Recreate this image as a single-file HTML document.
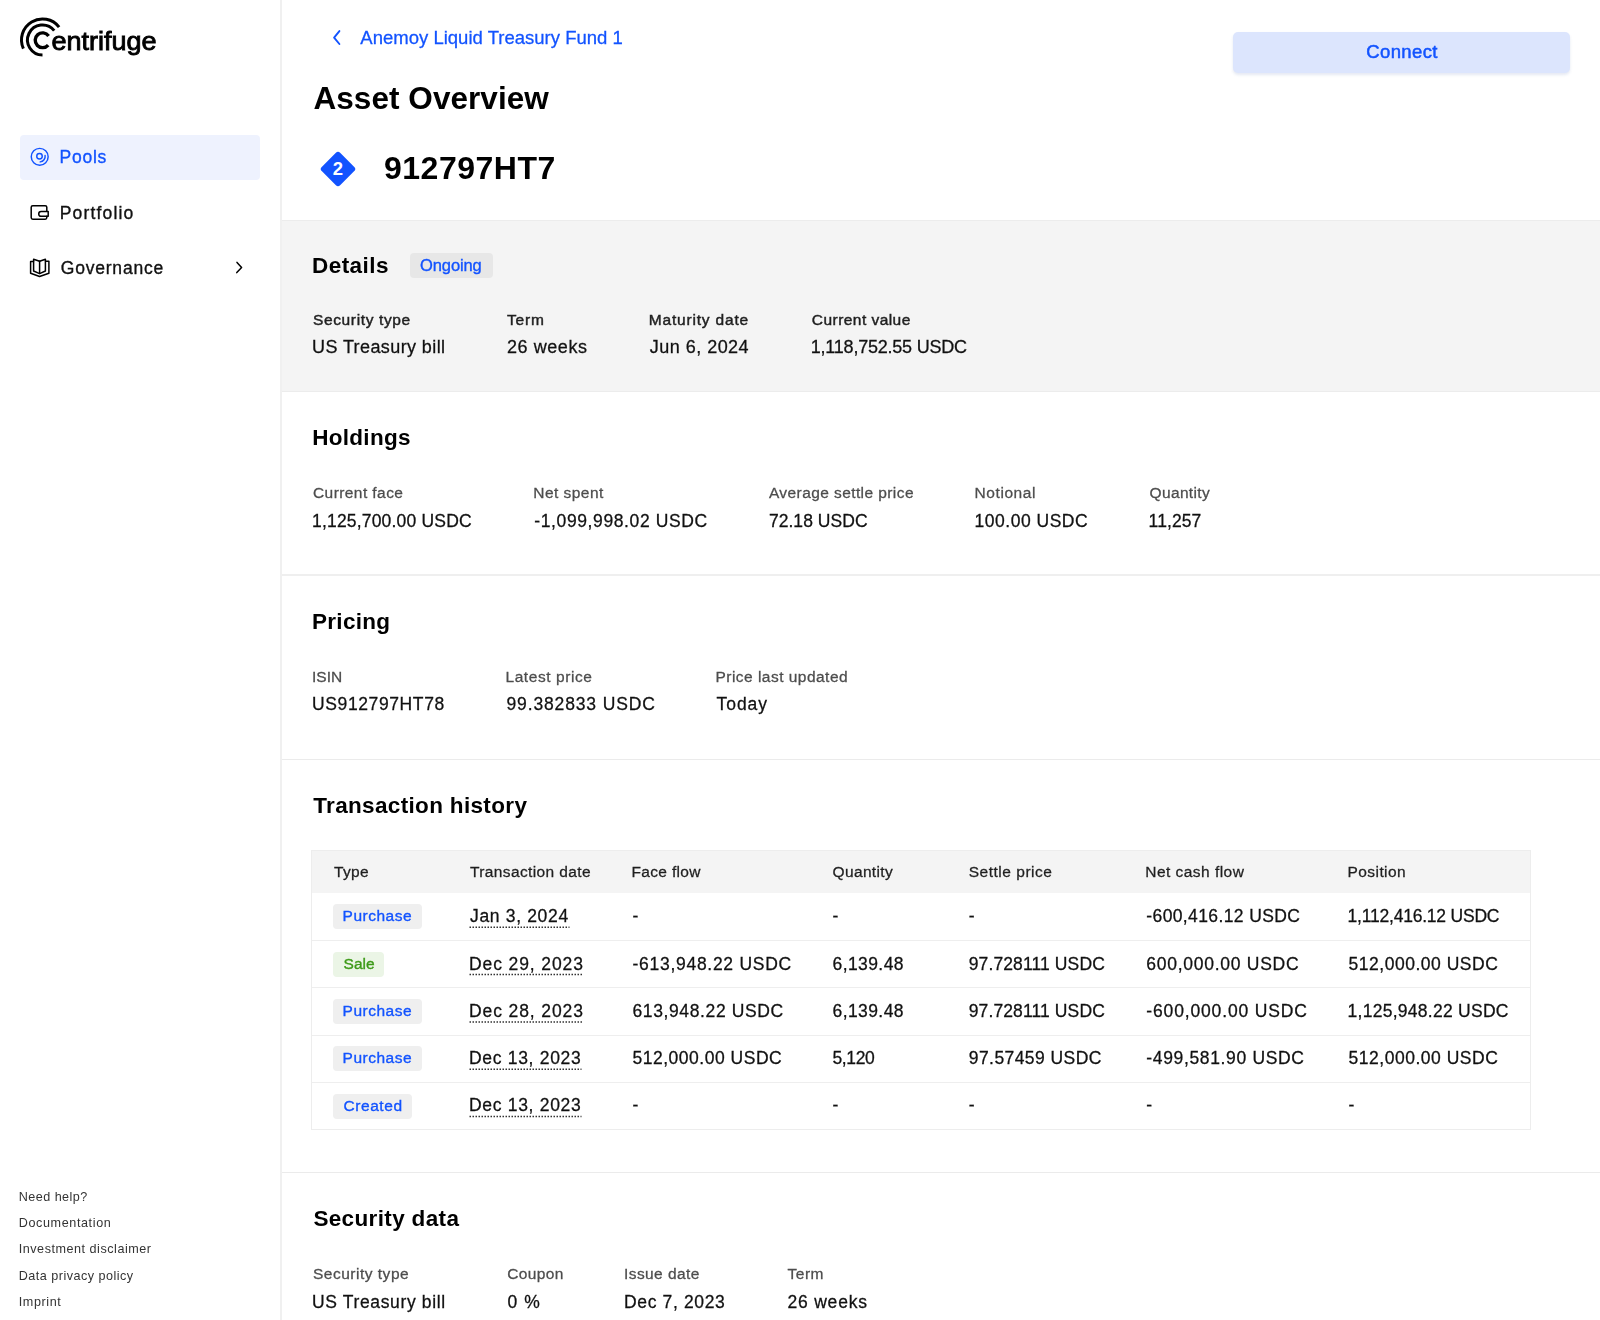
<!DOCTYPE html>
<html><head><meta charset="utf-8">
<style>
html,body{margin:0;padding:0;}
body{width:1600px;height:1320px;overflow:hidden;background:#fff;position:relative;-webkit-font-smoothing:antialiased;font-family:"Liberation Sans",sans-serif;}
.t{position:absolute;white-space:nowrap;}
.a{position:absolute;}
svg{position:absolute;overflow:visible;}
</style></head><body>
<!-- sidebar border -->
<div class="a" style="left:280px;top:0;width:2px;height:1320px;background:#f0f0f0"></div>
<!-- logo -->
<svg style="left:0;top:0;will-change:transform" width="200" height="80" viewBox="0 0 200 80">
  <g fill="none" stroke="#000" stroke-width="3">
    <path d="M59.1,27.1 A21,21 0 0 0 23.4,48.7"/>
    <path d="M54.2,30.6 A15,15 0 1 0 42.5,55"/>
  </g>
  <path d="M48.6,35.9 A7.4,7.4 0 1 0 48.2,45.1" fill="none" stroke="#000" stroke-width="3.4"/>
  <text x="51.5" y="50" font-family="Liberation Sans" font-size="25" stroke="#000" stroke-width="0.85" textLength="105" lengthAdjust="spacingAndGlyphs">entrifuge</text>
</svg>
<!-- pools nav bg -->
<div class="a" style="left:19.5px;top:134.5px;width:240.5px;height:45px;border-radius:4px;background:#eef2fe"></div>
<!-- pools icon -->
<svg style="left:0;top:0" width="60" height="300" viewBox="0 0 60 300">
  <g fill="none" stroke="#1253ff" stroke-width="1.45" stroke-linecap="round">
    <circle cx="39.7" cy="156.8" r="8.45"/>
    <circle cx="39.5" cy="156.2" r="2.75"/>
    <path d="M45.1,155.5 A5.6,5.6 0 0 1 40.2,161.9"/>
  </g>
  <g fill="none" stroke="#000" stroke-width="1.5" stroke-linecap="round" stroke-linejoin="round">
    <path d="M46.8,211.3 V207.3 Q46.8,205.7 45.2,205.7 H32.8 Q31.2,205.7 31.2,207.3 V217.6 Q31.2,219.2 32.8,219.2 H45.2 Q46.8,219.2 46.8,217.6 V216.3"/>
    <path d="M48.2,211.6 H41.1 A2.35,2.35 0 0 0 41.1,216.3 H48.2 Z"/>
    <path d="M33.5,261.4 H30.6 V273.2 L39.6,276.5 L48.9,273.2 V261.2 H45.6"/>
    <path d="M33.6,259.2 L39.6,261.3 L45.4,259.2 V271 L39.6,273.6 L33.6,271 Z"/>
    <path d="M39.6,261.3 V273.6"/>
    <path d="M237,262.4 L241.6,267.5 L236.8,272.6"/>
  </g>
</svg>
<!-- connect button -->
<div class="a" style="left:1233px;top:31.5px;width:337px;height:41px;border-radius:5px;background:#dce5fd;box-shadow:0 2px 3px rgba(40,70,160,0.12)"></div>
<!-- back chevron -->
<svg style="left:0;top:0" width="400" height="60" viewBox="0 0 400 60">
  <path d="M339.4,31.1 L334.1,37.6 L339.4,44" fill="none" stroke="#1253ff" stroke-width="1.9" stroke-linecap="round" stroke-linejoin="round"/>
</svg>
<!-- diamond -->
<div class="a" style="left:324.9px;top:155.9px;width:26px;height:26px;border-radius:3px;background:#1253ff;transform:rotate(45deg)"></div>
<div class="t" style="left:332.5px;top:156px;width:11px;font-size:18.5px;line-height:26px;font-weight:700;color:#fff;text-align:center">2</div>
<!-- details gray section -->
<div class="a" style="left:282px;top:220px;width:1318px;height:172px;background:#f4f4f4;border-top:1.5px solid #ececec;border-bottom:1.5px solid #ececec;box-sizing:border-box"></div>
<div class="a" style="left:409.6px;top:253px;width:83px;height:25px;border-radius:4px;background:#e7e7e7"></div>
<!-- separators -->
<div class="a" style="left:282px;top:574px;width:1318px;height:1.5px;background:#efefef"></div>
<div class="a" style="left:282px;top:758.5px;width:1318px;height:1.5px;background:#ebebeb"></div>
<div class="a" style="left:282px;top:1171.5px;width:1318px;height:1.2px;background:#ebebeb"></div>
<!-- table -->
<div class="a" style="left:311px;top:850px;width:1219.5px;height:279.5px;border:1px solid #ededed;box-sizing:border-box;background:#fff"></div>
<div class="a" style="left:312px;top:851px;width:1217.5px;height:42px;background:#f4f4f4"></div>
<div class="a" style="left:312px;top:940px;width:1217.5px;height:1px;background:#eeeeee"></div>
<div class="a" style="left:312px;top:987.3px;width:1217.5px;height:1px;background:#eeeeee"></div>
<div class="a" style="left:312px;top:1034.7px;width:1217.5px;height:1px;background:#eeeeee"></div>
<div class="a" style="left:312px;top:1082px;width:1217.5px;height:1px;background:#eeeeee"></div>
<!-- badges -->
<div class="a" style="left:333px;top:904.3px;width:88.5px;height:25px;border-radius:4px;background:#efefef"></div>
<div class="a" style="left:333px;top:951.7px;width:51.4px;height:25px;border-radius:4px;background:#ebf5e6"></div>
<div class="a" style="left:333px;top:999px;width:88.5px;height:25px;border-radius:4px;background:#efefef"></div>
<div class="a" style="left:333px;top:1046.3px;width:88.5px;height:25px;border-radius:4px;background:#efefef"></div>
<div class="a" style="left:333px;top:1093.6px;width:79px;height:25px;border-radius:4px;background:#efefef"></div>
<!-- dotted underlines -->
<svg style="left:0;top:0" width="600" height="1200" viewBox="0 0 600 1200"><g stroke="#333" stroke-width="1.5" stroke-dasharray="1.5 1.5"><line x1="469.5" y1="927.3" x2="569.5" y2="927.3"/><line x1="469.5" y1="974.6" x2="583.5" y2="974.6"/><line x1="469.5" y1="1021.9" x2="583.5" y2="1021.9"/><line x1="469.5" y1="1069.2" x2="581.5" y2="1069.2"/><line x1="469.5" y1="1116.5" x2="581.5" y2="1116.5"/></g></svg>
<div style="position:absolute;left:0;top:0;width:1600px;height:1320px;will-change:transform">
<div class="t" style="left:59.60px;top:145.50px;font-size:17.5px;line-height:22px;color:#1253ff;letter-spacing:0.744px;-webkit-text-stroke:0.35px currentColor">Pools</div>
<div class="t" style="left:59.75px;top:201.80px;font-size:17.5px;line-height:22px;color:#111111;letter-spacing:1.161px;-webkit-text-stroke:0.35px currentColor">Portfolio</div>
<div class="t" style="left:60.75px;top:256.80px;font-size:17.5px;line-height:22px;color:#111111;letter-spacing:0.794px;-webkit-text-stroke:0.35px currentColor">Governance</div>
<div class="t" style="left:18.75px;top:1188.90px;font-size:12.6px;line-height:16px;color:#333333;letter-spacing:0.454px">Need help?</div>
<div class="t" style="left:18.75px;top:1215.00px;font-size:12.6px;line-height:16px;color:#333333;letter-spacing:0.608px">Documentation</div>
<div class="t" style="left:18.75px;top:1241.20px;font-size:12.6px;line-height:16px;color:#333333;letter-spacing:0.521px">Investment disclaimer</div>
<div class="t" style="left:18.75px;top:1267.70px;font-size:12.6px;line-height:16px;color:#333333;letter-spacing:0.478px">Data privacy policy</div>
<div class="t" style="left:18.75px;top:1293.70px;font-size:12.6px;line-height:16px;color:#333333;letter-spacing:0.585px">Imprint</div>
<div class="t" style="left:360.30px;top:26.20px;font-size:18.5px;line-height:23px;color:#1253ff;letter-spacing:0.012px;-webkit-text-stroke:0.28px currentColor">Anemoy Liquid Treasury Fund 1</div>
<div class="t" style="left:313.50px;top:79.00px;font-size:31.5px;line-height:39px;color:#000;font-weight:700;letter-spacing:0.051px">Asset Overview</div>
<div class="t" style="left:383.90px;top:148.40px;font-size:32px;line-height:40px;color:#000;font-weight:700;letter-spacing:0.533px">912797HT7</div>
<div class="t" style="left:1366.25px;top:40.00px;font-size:18.5px;line-height:23px;color:#1253ff;letter-spacing:0.372px;-webkit-text-stroke:0.5px currentColor">Connect</div>
<div class="t" style="left:312.00px;top:252.00px;font-size:22.5px;line-height:28px;color:#000;font-weight:700;letter-spacing:0.455px">Details</div>
<div class="t" style="left:420.00px;top:255.40px;font-size:16.5px;line-height:21px;color:#1253ff;letter-spacing:-0.101px;-webkit-text-stroke:0.35px currentColor">Ongoing</div>
<div class="t" style="left:313.00px;top:310.20px;font-size:15.5px;line-height:19px;color:#1f1f1f;letter-spacing:0.636px;-webkit-text-stroke:0.45px currentColor">Security type</div>
<div class="t" style="left:312.00px;top:335.90px;font-size:18px;line-height:23px;color:#111111;letter-spacing:0.402px;-webkit-text-stroke:0.28px currentColor">US Treasury bill</div>
<div class="t" style="left:507.00px;top:310.20px;font-size:15.5px;line-height:19px;color:#1f1f1f;letter-spacing:0.823px;-webkit-text-stroke:0.45px currentColor">Term</div>
<div class="t" style="left:507.00px;top:335.90px;font-size:18px;line-height:23px;color:#111111;letter-spacing:0.565px;-webkit-text-stroke:0.28px currentColor">26 weeks</div>
<div class="t" style="left:648.80px;top:310.20px;font-size:15.5px;line-height:19px;color:#1f1f1f;letter-spacing:0.811px;-webkit-text-stroke:0.45px currentColor">Maturity date</div>
<div class="t" style="left:649.80px;top:335.90px;font-size:18px;line-height:23px;color:#111111;letter-spacing:0.473px;-webkit-text-stroke:0.28px currentColor">Jun 6, 2024</div>
<div class="t" style="left:811.80px;top:310.20px;font-size:15.5px;line-height:19px;color:#1f1f1f;letter-spacing:0.456px;-webkit-text-stroke:0.45px currentColor">Current value</div>
<div class="t" style="left:810.80px;top:335.90px;font-size:18px;line-height:23px;color:#111111;letter-spacing:-0.223px;-webkit-text-stroke:0.28px currentColor">1,118,752.55 USDC</div>
<div class="t" style="left:312.20px;top:423.80px;font-size:22.5px;line-height:28px;color:#000;font-weight:700;letter-spacing:0.296px">Holdings</div>
<div class="t" style="left:313.00px;top:483.20px;font-size:15.5px;line-height:19px;color:#4d4d4d;letter-spacing:0.421px;-webkit-text-stroke:0.28px currentColor">Current face</div>
<div class="t" style="left:312.00px;top:509.60px;font-size:17.5px;line-height:22px;color:#111111;letter-spacing:0.188px;-webkit-text-stroke:0.28px currentColor">1,125,700.00 USDC</div>
<div class="t" style="left:533.30px;top:483.20px;font-size:15.5px;line-height:19px;color:#4d4d4d;letter-spacing:0.458px;-webkit-text-stroke:0.28px currentColor">Net spent</div>
<div class="t" style="left:534.30px;top:509.60px;font-size:17.5px;line-height:22px;color:#111111;letter-spacing:0.611px;-webkit-text-stroke:0.28px currentColor">-1,099,998.02 USDC</div>
<div class="t" style="left:768.90px;top:483.20px;font-size:15.5px;line-height:19px;color:#4d4d4d;letter-spacing:0.416px;-webkit-text-stroke:0.28px currentColor">Average settle price</div>
<div class="t" style="left:768.90px;top:509.60px;font-size:17.5px;line-height:22px;color:#111111;letter-spacing:0.044px;-webkit-text-stroke:0.28px currentColor">72.18 USDC</div>
<div class="t" style="left:974.60px;top:483.20px;font-size:15.5px;line-height:19px;color:#4d4d4d;letter-spacing:0.568px;-webkit-text-stroke:0.28px currentColor">Notional</div>
<div class="t" style="left:974.60px;top:509.60px;font-size:17.5px;line-height:22px;color:#111111;letter-spacing:0.506px;-webkit-text-stroke:0.28px currentColor">100.00 USDC</div>
<div class="t" style="left:1149.60px;top:483.20px;font-size:15.5px;line-height:19px;color:#4d4d4d;letter-spacing:0.332px;-webkit-text-stroke:0.28px currentColor">Quantity</div>
<div class="t" style="left:1148.60px;top:509.60px;font-size:17.5px;line-height:22px;color:#111111;letter-spacing:0.101px;-webkit-text-stroke:0.28px currentColor">11,257</div>
<div class="t" style="left:312.00px;top:607.70px;font-size:22.5px;line-height:28px;color:#000;font-weight:700;letter-spacing:0.296px">Pricing</div>
<div class="t" style="left:312.00px;top:667.30px;font-size:15.5px;line-height:19px;color:#4d4d4d;letter-spacing:0.016px;-webkit-text-stroke:0.28px currentColor">ISIN</div>
<div class="t" style="left:312.00px;top:693.30px;font-size:17.5px;line-height:22px;color:#111111;letter-spacing:0.612px;-webkit-text-stroke:0.28px currentColor">US912797HT78</div>
<div class="t" style="left:505.50px;top:667.30px;font-size:15.5px;line-height:19px;color:#4d4d4d;letter-spacing:0.563px;-webkit-text-stroke:0.28px currentColor">Latest price</div>
<div class="t" style="left:506.50px;top:693.30px;font-size:17.5px;line-height:22px;color:#111111;letter-spacing:0.859px;-webkit-text-stroke:0.28px currentColor">99.382833 USDC</div>
<div class="t" style="left:715.50px;top:667.30px;font-size:15.5px;line-height:19px;color:#4d4d4d;letter-spacing:0.473px;-webkit-text-stroke:0.28px currentColor">Price last updated</div>
<div class="t" style="left:716.50px;top:693.30px;font-size:17.5px;line-height:22px;color:#111111;letter-spacing:0.963px;-webkit-text-stroke:0.28px currentColor">Today</div>
<div class="t" style="left:313.20px;top:791.90px;font-size:22.5px;line-height:28px;color:#000;font-weight:700;letter-spacing:0.342px">Transaction history</div>
<div class="t" style="left:334.00px;top:862.20px;font-size:15.5px;line-height:19px;color:#1f1f1f;letter-spacing:0.339px;-webkit-text-stroke:0.28px currentColor">Type</div>
<div class="t" style="left:470.00px;top:862.20px;font-size:15.5px;line-height:19px;color:#1f1f1f;letter-spacing:0.383px;-webkit-text-stroke:0.28px currentColor">Transaction date</div>
<div class="t" style="left:631.50px;top:862.20px;font-size:15.5px;line-height:19px;color:#1f1f1f;letter-spacing:0.327px;-webkit-text-stroke:0.28px currentColor">Face flow</div>
<div class="t" style="left:832.50px;top:862.20px;font-size:15.5px;line-height:19px;color:#1f1f1f;letter-spacing:0.361px;-webkit-text-stroke:0.28px currentColor">Quantity</div>
<div class="t" style="left:968.75px;top:862.20px;font-size:15.5px;line-height:19px;color:#1f1f1f;letter-spacing:0.508px;-webkit-text-stroke:0.28px currentColor">Settle price</div>
<div class="t" style="left:1145.30px;top:862.20px;font-size:15.5px;line-height:19px;color:#1f1f1f;letter-spacing:0.463px;-webkit-text-stroke:0.28px currentColor">Net cash flow</div>
<div class="t" style="left:1347.60px;top:862.20px;font-size:15.5px;line-height:19px;color:#1f1f1f;letter-spacing:0.411px;-webkit-text-stroke:0.28px currentColor">Position</div>
<div class="t" style="left:342.60px;top:906.20px;font-size:15.5px;line-height:19px;color:#1253ff;letter-spacing:0.506px;-webkit-text-stroke:0.35px currentColor">Purchase</div>
<div class="t" style="left:470.00px;top:905.00px;font-size:17.5px;line-height:22px;color:#111111;letter-spacing:0.667px;-webkit-text-stroke:0.28px currentColor">Jan 3, 2024</div>
<div class="t" style="left:632.50px;top:905.00px;font-size:17.5px;line-height:22px;color:#111111;-webkit-text-stroke:0.28px currentColor">-</div>
<div class="t" style="left:832.50px;top:905.00px;font-size:17.5px;line-height:22px;color:#111111;-webkit-text-stroke:0.28px currentColor">-</div>
<div class="t" style="left:968.75px;top:905.00px;font-size:17.5px;line-height:22px;color:#111111;-webkit-text-stroke:0.28px currentColor">-</div>
<div class="t" style="left:1146.30px;top:905.00px;font-size:17.5px;line-height:22px;color:#111111;letter-spacing:0.385px;-webkit-text-stroke:0.28px currentColor">-600,416.12 USDC</div>
<div class="t" style="left:1347.60px;top:905.00px;font-size:17.5px;line-height:22px;color:#111111;letter-spacing:-0.218px;-webkit-text-stroke:0.28px currentColor">1,112,416.12 USDC</div>
<div class="t" style="left:343.60px;top:953.70px;font-size:15.5px;line-height:19px;color:#3d9a18;-webkit-text-stroke:0.35px currentColor">Sale</div>
<div class="t" style="left:469.00px;top:952.50px;font-size:17.5px;line-height:22px;color:#111111;letter-spacing:0.894px;-webkit-text-stroke:0.28px currentColor">Dec 29, 2023</div>
<div class="t" style="left:632.50px;top:952.50px;font-size:17.5px;line-height:22px;color:#111111;letter-spacing:0.718px;-webkit-text-stroke:0.28px currentColor">-613,948.22 USDC</div>
<div class="t" style="left:832.50px;top:952.50px;font-size:17.5px;line-height:22px;color:#111111;letter-spacing:0.416px;-webkit-text-stroke:0.28px currentColor">6,139.48</div>
<div class="t" style="left:968.75px;top:952.50px;font-size:17.5px;line-height:22px;color:#111111;letter-spacing:0.113px;-webkit-text-stroke:0.28px currentColor">97.728111 USDC</div>
<div class="t" style="left:1146.30px;top:952.50px;font-size:17.5px;line-height:22px;color:#111111;letter-spacing:0.736px;-webkit-text-stroke:0.28px currentColor">600,000.00 USDC</div>
<div class="t" style="left:1348.60px;top:952.50px;font-size:17.5px;line-height:22px;color:#111111;letter-spacing:0.515px;-webkit-text-stroke:0.28px currentColor">512,000.00 USDC</div>
<div class="t" style="left:342.60px;top:1001.00px;font-size:15.5px;line-height:19px;color:#1253ff;letter-spacing:0.506px;-webkit-text-stroke:0.35px currentColor">Purchase</div>
<div class="t" style="left:469.00px;top:999.80px;font-size:17.5px;line-height:22px;color:#111111;letter-spacing:0.894px;-webkit-text-stroke:0.28px currentColor">Dec 28, 2023</div>
<div class="t" style="left:632.50px;top:999.80px;font-size:17.5px;line-height:22px;color:#111111;letter-spacing:0.615px;-webkit-text-stroke:0.28px currentColor">613,948.22 USDC</div>
<div class="t" style="left:832.50px;top:999.80px;font-size:17.5px;line-height:22px;color:#111111;letter-spacing:0.416px;-webkit-text-stroke:0.28px currentColor">6,139.48</div>
<div class="t" style="left:968.75px;top:999.80px;font-size:17.5px;line-height:22px;color:#111111;letter-spacing:0.113px;-webkit-text-stroke:0.28px currentColor">97.728111 USDC</div>
<div class="t" style="left:1146.30px;top:999.80px;font-size:17.5px;line-height:22px;color:#111111;letter-spacing:0.852px;-webkit-text-stroke:0.28px currentColor">-600,000.00 USDC</div>
<div class="t" style="left:1347.60px;top:999.80px;font-size:17.5px;line-height:22px;color:#111111;letter-spacing:0.266px;-webkit-text-stroke:0.28px currentColor">1,125,948.22 USDC</div>
<div class="t" style="left:342.60px;top:1048.40px;font-size:15.5px;line-height:19px;color:#1253ff;letter-spacing:0.506px;-webkit-text-stroke:0.35px currentColor">Purchase</div>
<div class="t" style="left:469.00px;top:1047.20px;font-size:17.5px;line-height:22px;color:#111111;letter-spacing:0.694px;-webkit-text-stroke:0.28px currentColor">Dec 13, 2023</div>
<div class="t" style="left:632.50px;top:1047.20px;font-size:17.5px;line-height:22px;color:#111111;letter-spacing:0.515px;-webkit-text-stroke:0.28px currentColor">512,000.00 USDC</div>
<div class="t" style="left:832.50px;top:1047.20px;font-size:17.5px;line-height:22px;color:#111111;letter-spacing:-0.390px;-webkit-text-stroke:0.28px currentColor">5,120</div>
<div class="t" style="left:968.75px;top:1047.20px;font-size:17.5px;line-height:22px;color:#111111;letter-spacing:0.433px;-webkit-text-stroke:0.28px currentColor">97.57459 USDC</div>
<div class="t" style="left:1146.30px;top:1047.20px;font-size:17.5px;line-height:22px;color:#111111;letter-spacing:0.652px;-webkit-text-stroke:0.28px currentColor">-499,581.90 USDC</div>
<div class="t" style="left:1348.60px;top:1047.20px;font-size:17.5px;line-height:22px;color:#111111;letter-spacing:0.515px;-webkit-text-stroke:0.28px currentColor">512,000.00 USDC</div>
<div class="t" style="left:343.60px;top:1095.60px;font-size:15.5px;line-height:19px;color:#1253ff;letter-spacing:0.546px;-webkit-text-stroke:0.35px currentColor">Created</div>
<div class="t" style="left:469.00px;top:1094.40px;font-size:17.5px;line-height:22px;color:#111111;letter-spacing:0.694px;-webkit-text-stroke:0.28px currentColor">Dec 13, 2023</div>
<div class="t" style="left:632.50px;top:1094.40px;font-size:17.5px;line-height:22px;color:#111111;-webkit-text-stroke:0.28px currentColor">-</div>
<div class="t" style="left:832.50px;top:1094.40px;font-size:17.5px;line-height:22px;color:#111111;-webkit-text-stroke:0.28px currentColor">-</div>
<div class="t" style="left:968.75px;top:1094.40px;font-size:17.5px;line-height:22px;color:#111111;-webkit-text-stroke:0.28px currentColor">-</div>
<div class="t" style="left:1146.30px;top:1094.40px;font-size:17.5px;line-height:22px;color:#111111;-webkit-text-stroke:0.28px currentColor">-</div>
<div class="t" style="left:1348.60px;top:1094.40px;font-size:17.5px;line-height:22px;color:#111111;-webkit-text-stroke:0.28px currentColor">-</div>
<div class="t" style="left:313.40px;top:1205.30px;font-size:22.5px;line-height:28px;color:#000;font-weight:700;letter-spacing:0.351px">Security data</div>
<div class="t" style="left:313.00px;top:1264.00px;font-size:15.5px;line-height:19px;color:#4d4d4d;letter-spacing:0.502px;-webkit-text-stroke:0.28px currentColor">Security type</div>
<div class="t" style="left:312.00px;top:1290.90px;font-size:17.5px;line-height:22px;color:#111111;letter-spacing:0.644px;-webkit-text-stroke:0.28px currentColor">US Treasury bill</div>
<div class="t" style="left:507.30px;top:1264.00px;font-size:15.5px;line-height:19px;color:#4d4d4d;letter-spacing:0.365px;-webkit-text-stroke:0.28px currentColor">Coupon</div>
<div class="t" style="left:507.50px;top:1290.90px;font-size:17.5px;line-height:22px;color:#111111;-webkit-text-stroke:0.28px currentColor">0</div>
<div class="t" style="left:624.00px;top:1264.00px;font-size:15.5px;line-height:19px;color:#4d4d4d;letter-spacing:0.422px;-webkit-text-stroke:0.28px currentColor">Issue date</div>
<div class="t" style="left:624.00px;top:1290.90px;font-size:17.5px;line-height:22px;color:#111111;letter-spacing:0.636px;-webkit-text-stroke:0.28px currentColor">Dec 7, 2023</div>
<div class="t" style="left:787.50px;top:1264.00px;font-size:15.5px;line-height:19px;color:#4d4d4d;letter-spacing:0.523px;-webkit-text-stroke:0.28px currentColor">Term</div>
<div class="t" style="left:787.50px;top:1290.90px;font-size:17.5px;line-height:22px;color:#111111;letter-spacing:0.788px;-webkit-text-stroke:0.28px currentColor">26 weeks</div>
<div class="t" style="left:524.20px;top:1290.90px;font-size:17.5px;line-height:22px;color:#111111;-webkit-text-stroke:0.28px currentColor">%</div>
</div>
</body></html>
